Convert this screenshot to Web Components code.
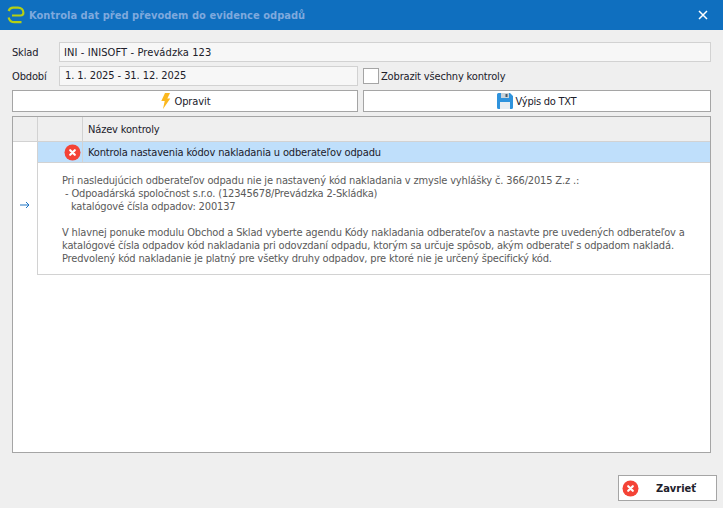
<!DOCTYPE html>
<html>
<head>
<meta charset="utf-8">
<style>
html, body { margin: 0; height: 100%; }
body { width: 723px; height: 508px; overflow: hidden; background: #efefef; font: 11px "DejaVu Sans Condensed", "DejaVu Sans", sans-serif; font-stretch: condensed; letter-spacing: -0.16px; color: #20202a; }
</style>
</head>
<body>
<app-dialog>
	<field-row slot="fields" label="Sklad" value="INI - INISOFT - Prevádzka 123"></field-row>
	<period-row slot="fields" label="Období" value="1. 1. 2025 - 31. 12. 2025" check="Zobrazit všechny kontroly"></period-row>
	<action-bar slot="fields"></action-bar>
	<check-grid slot="grid"></check-grid>
</app-dialog>
<script>
const TEXT_FONT = '"DejaVu Sans Condensed", "DejaVu Sans", sans-serif';

const ERROR_ICON = `
	<svg width="17" height="17" viewBox="0 0 17 17">
		<circle cx="8.5" cy="8.5" r="8" fill="#f44336"/>
		<path d="M6.2 6.2l4.6 4.6M10.8 6.2l-4.6 4.6" stroke="#fff" stroke-width="2.2" stroke-linecap="round"/>
	</svg>`;

class AppDialog extends HTMLElement {
	constructor() {
		super();
		this.attachShadow({ mode: 'open' });
	}

	connectedCallback() {
		this.shadowRoot.innerHTML = `
			<style>
				:host { display: flex; flex-direction: column; width: 723px; height: 508px; }
				header { display: flex; align-items: center; height: 30px; flex: none; background: #0f6fbf; padding: 0 0 0 7px; }
				.logo { margin-right: 4px; flex: none; }
				h1 { flex: 1; margin: 0; font: bold 11px ${TEXT_FONT}; letter-spacing: 0.04px; color: #7ea9dd; }
				.close { width: 10px; height: 10px; margin-right: 15px; flex: none; }
				main { flex: 1; display: flex; flex-direction: column; padding: 12px 12px 0 12px; min-height: 0; }
				.fields { display: flex; flex-direction: column; }
				.grid { display: block; height: 337px; margin-top: 4px; }
				footer { display: flex; justify-content: flex-end; padding: 23px 6px 7px 0; }
				button { display: flex; align-items: center; width: 99px; height: 26px; padding: 0 0 0 3px; background: #fff; border: 1px solid #a5a5a5; box-sizing: border-box; font: bold 11px ${TEXT_FONT}; color: #20202a; }
				button span { flex: 1; text-align: center; padding: 1px 3px 0 0; }
			</style>
			<header>
				<svg class="logo" width="18" height="18" viewBox="0 0 18 18" fill="none" stroke="#b5cf14" stroke-width="2.2">
					<path d="M1.6 5C2.5 2.6 4.2 1.6 6 1.6h5c3.2 0 5.4 2.4 5.4 5.2 0 1.7-1 2.7-2.8 2.7H5"/>
					<path d="M1.6 11.5C2.4 14.6 4.6 16.2 7.5 16.2h7"/>
				</svg>
				<h1>Kontrola dat před převodem do evidence odpadů</h1>
				<svg class="close" viewBox="0 0 10 10"><path d="M1 1l8 8M9 1l-8 8" stroke="#fff" stroke-width="1.5"/></svg>
			</header>
			<main>
				<div class="fields"><slot name="fields"></slot></div>
				<div class="grid"><slot name="grid"></slot></div>
			</main>
			<footer>
				<button>${ERROR_ICON}<span>Zavrieť</span></button>
			</footer>
		`;
	}
}

class FieldRow extends HTMLElement {
	constructor() {
		super();
		this.attachShadow({ mode: 'open' });
	}

	connectedCallback() {
		this.shadowRoot.innerHTML = `
			<style>
				:host { display: flex; align-items: center; height: 20px; margin-bottom: 4px; }
				label { width: 47px; flex: none; }
				.box { flex: 1; height: 20px; box-sizing: border-box; background: #f7f7f7; border: 1px solid #d2d2d2; padding: 1px 4px 0; line-height: 18px; letter-spacing: 0.1px; }
			</style>
			<label>${this.getAttribute('label')}</label>
			<div class="box">${this.getAttribute('value')}</div>
		`;
	}
}

class PeriodRow extends HTMLElement {
	constructor() {
		super();
		this.attachShadow({ mode: 'open' });
	}

	connectedCallback() {
		this.shadowRoot.innerHTML = `
			<style>
				:host { display: flex; align-items: center; height: 20px; margin-bottom: 4px; }
				label { width: 47px; flex: none; }
				.box { width: 299px; height: 20px; flex: none; box-sizing: border-box; background: #f7f7f7; border: 1px solid #d2d2d2; padding: 0 5px; line-height: 18px; letter-spacing: -0.08px; }
				.check { width: 16px; height: 16px; flex: none; margin: 0 2px 0 5px; box-sizing: border-box; background: #fff; border: 1px solid #a5a5a5; }
			</style>
			<label>${this.getAttribute('label')}</label>
			<div class="box">${this.getAttribute('value')}</div>
			<div class="check"></div>
			<span>${this.getAttribute('check')}</span>
		`;
	}
}

class ActionBar extends HTMLElement {
	constructor() {
		super();
		this.attachShadow({ mode: 'open' });
	}

	connectedCallback() {
		this.shadowRoot.innerHTML = `
			<style>
				:host { display: grid; grid-template-columns: 346px 348px; column-gap: 5px; height: 22px; }
				button { display: flex; align-items: center; justify-content: center; gap: 3px; height: 22px; padding: 0; background: #fff; border: 1px solid #a5a5a5; box-sizing: border-box; font: 11px ${TEXT_FONT}; letter-spacing: -0.1px; color: #20202a; }
				.fix { gap: 4px; }
				.txt { letter-spacing: -0.25px; padding-right: 1px; }
			</style>
			<button class="fix">
				<svg width="11" height="16" viewBox="0 0 10 16"><path d="M4.5 0H9.5L6.8 5.5H9.8L2.5 16L4.2 8H0.8Z" fill="#fbb81f"/></svg>
				Opravit
			</button>
			<button class="txt">
				<svg width="16" height="16" viewBox="0 0 16 16">
					<path d="M0 1.5A1.5 1.5 0 0 1 1.5 0H13L16 3V14.5A1.5 1.5 0 0 1 14.5 16H1.5A1.5 1.5 0 0 1 0 14.5Z" fill="#2f93dd"/>
					<rect x="4" y="0" width="8" height="5" fill="#c9d3da"/>
					<rect x="8.5" y="1" width="2" height="3" fill="#4c5a66"/>
					<rect x="3" y="9" width="10" height="7" fill="#e9eef2"/>
				</svg>
				Výpis do TXT
			</button>
		`;
	}
}

class CheckGrid extends HTMLElement {
	constructor() {
		super();
		this.attachShadow({ mode: 'open' });
	}

	connectedCallback() {
		this.shadowRoot.innerHTML = `
			<style>
				:host { display: grid; grid-template-columns: 24px minmax(0, 1fr); grid-template-rows: 25px 1fr; height: 337px; box-sizing: border-box; border: 1px solid #a5a5a5; background: #fff; }
				.corner { background: #efefef; border-bottom: 1px solid #d2d2d2; }
				.head { display: grid; grid-template-columns: 44px 1fr; background: #efefef; border-bottom: 1px solid #d2d2d2; border-left: 1px solid #d2d2d2; }
				.head div + div { border-left: 1px solid #d2d2d2; padding: 1px 0 0 5px; line-height: 24px; }
				.indicator { display: flex; align-items: flex-start; justify-content: center; padding-top: 59px; height: 112px; box-sizing: border-box; }
				.body { min-width: 0; }
				.row { display: grid; grid-template-columns: 44px 1fr; height: 21px; box-sizing: border-box; background: #bfdffb; border-bottom: 1px solid #d2d2d2; border-left: 1px solid #d2d2d2; }
				.row .icon { display: flex; justify-content: flex-end; align-items: center; padding-right: 1px; }
				.row .name { border-left: 1px solid #d2d2d2; padding: 1px 0 0 5px; line-height: 19px; }
				.detail { height: 112px; box-sizing: border-box; padding: 11px 8px 0 24px; border-bottom: 1px solid #d2d2d2; border-left: 1px solid #d2d2d2; color: #5a5a5a; line-height: 13px; white-space: pre; }
			</style>
			<div class="corner"></div>
			<div class="head"><div></div><div>Název kontroly</div></div>
			<div class="indicator">
				<svg width="10" height="8" viewBox="0 0 10 8" fill="none" stroke="#1f74c4"><path d="M0 4H9M6 1l3 3-3 3"/></svg>
			</div>
			<div class="body">
				<div class="row"><div class="icon">${ERROR_ICON}</div><div class="name">Kontrola nastavenia kódov nakladania u odberateľov odpadu</div></div>
				<div class="detail">Pri nasledujúcich odberateľov odpadu nie je nastavený kód nakladania v zmysle vyhlášky č. 366/2015 Z.z .:
 - Odpoadárská spoločnost s.r.o. (12345678/Prevádzka 2-Skládka)
   katalógové čísla odpadov: 200137

V hlavnej ponuke modulu Obchod a Sklad vyberte agendu Kódy nakladania odberateľov a nastavte pre uvedených odberateľov a
katalógové čísla odpadov kód nakladania pri odovzdaní odpadu, ktorým sa určuje spôsob, akým odberateľ s odpadom nakladá.
Predvolený kód nakladanie je platný pre všetky druhy odpadov, pre ktoré nie je určený špecifický kód.</div>
			</div>
		`;
	}
}

customElements.define('app-dialog', AppDialog);
customElements.define('field-row', FieldRow);
customElements.define('period-row', PeriodRow);
customElements.define('action-bar', ActionBar);
customElements.define('check-grid', CheckGrid);
</script>
</body>
</html>
